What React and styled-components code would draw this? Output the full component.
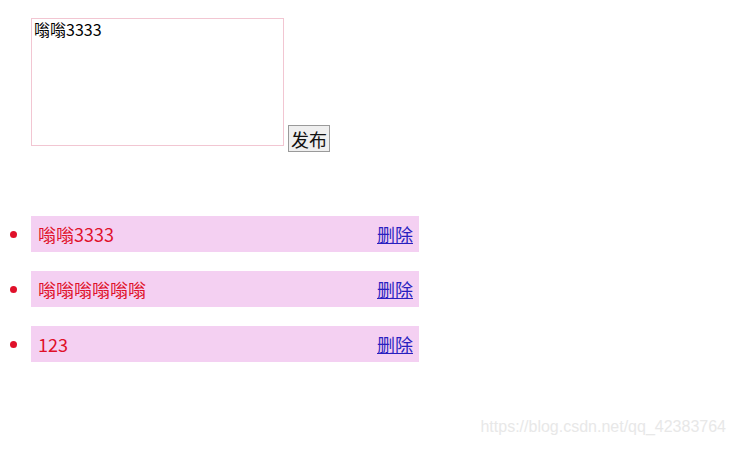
import React, { useState } from 'react'
import styled, { createGlobalStyle } from 'styled-components'

const GlobalStyle = createGlobalStyle`
  html, body { margin: 0; padding: 0; background: #fff; }
  body { font-family: "Noto Sans CJK SC", "Noto Sans", sans-serif; }
`

const Page = styled.div`
  position: relative;
  width: 738px;
  height: 450px;
  padding: 18px 0 0 0;
  box-sizing: border-box;
  overflow: hidden;
`

const Composer = styled.form`
  display: flex;
  align-items: flex-end;
  gap: 4px;
  padding-left: 31px;
`

const Input = styled.textarea`
  width: 253px;
  height: 128px;
  box-sizing: border-box;
  border: 1px solid #f2c6d2;
  padding: 1px 2px;
  margin: 0;
  resize: none;
  font-family: "Noto Sans CJK SC", sans-serif;
  font-size: 16px;
  line-height: 18px;
  color: #000;
  outline: none;
`

const Submit = styled.button`
  height: 27px;
  margin-bottom: -6px;
  padding: 0 2px;
  border: 1px solid #9a9a9a;
  background: #efefef;
  font-family: "Noto Sans CJK SC", sans-serif;
  font-size: 18px;
  line-height: 24px;
  color: #111;
`

const List = styled.ul`
  margin: 70px 0 0 0;
  padding-left: 31px;
  color: #e0102a;
  list-style: disc outside;
`

const Item = styled.li`
  width: 388px;
  height: 36px;
  box-sizing: border-box;
  margin-bottom: 19px;
  padding: 0 6px 0 7px;
  background: #f4d0f2;
  font-size: 18px;
  line-height: 36px;

  & > div {
    display: flex;
    justify-content: space-between;
    align-items: center;
  }
`

const Remove = styled.a`
  color: #2a1fc0;
  text-decoration: underline;
  font-size: 18px;
  cursor: pointer;
`

const Watermark = styled.span`
  position: absolute;
  right: 12px;
  bottom: 14px;
  font-family: "Liberation Sans", Arial, sans-serif;
  font-size: 16px;
  color: #e8e8e8;
`

export default function App() {
  const [text, setText] = useState('嗡嗡3333')
  const [items, setItems] = useState(['嗡嗡3333', '嗡嗡嗡嗡嗡嗡', '123'])

  const publish = (e) => {
    e.preventDefault()
    if (text.length > 0) setItems([text, ...items])
  }

  return (
    <Page>
      <GlobalStyle />
      <Composer onSubmit={publish}>
        <Input value={text} onChange={(e) => setText(e.target.value)} />
        <Submit>发布</Submit>
      </Composer>
      <List>
        {items.map((it, i) => (
          <Item key={i}>
            <div>
              <span>{it}</span>
              <Remove onClick={() => setItems(items.filter((_, j) => j !== i))}>删除</Remove>
            </div>
          </Item>
        ))}
      </List>
      <Watermark>https://blog.csdn.net/qq_42383764</Watermark>
    </Page>
  )
}
